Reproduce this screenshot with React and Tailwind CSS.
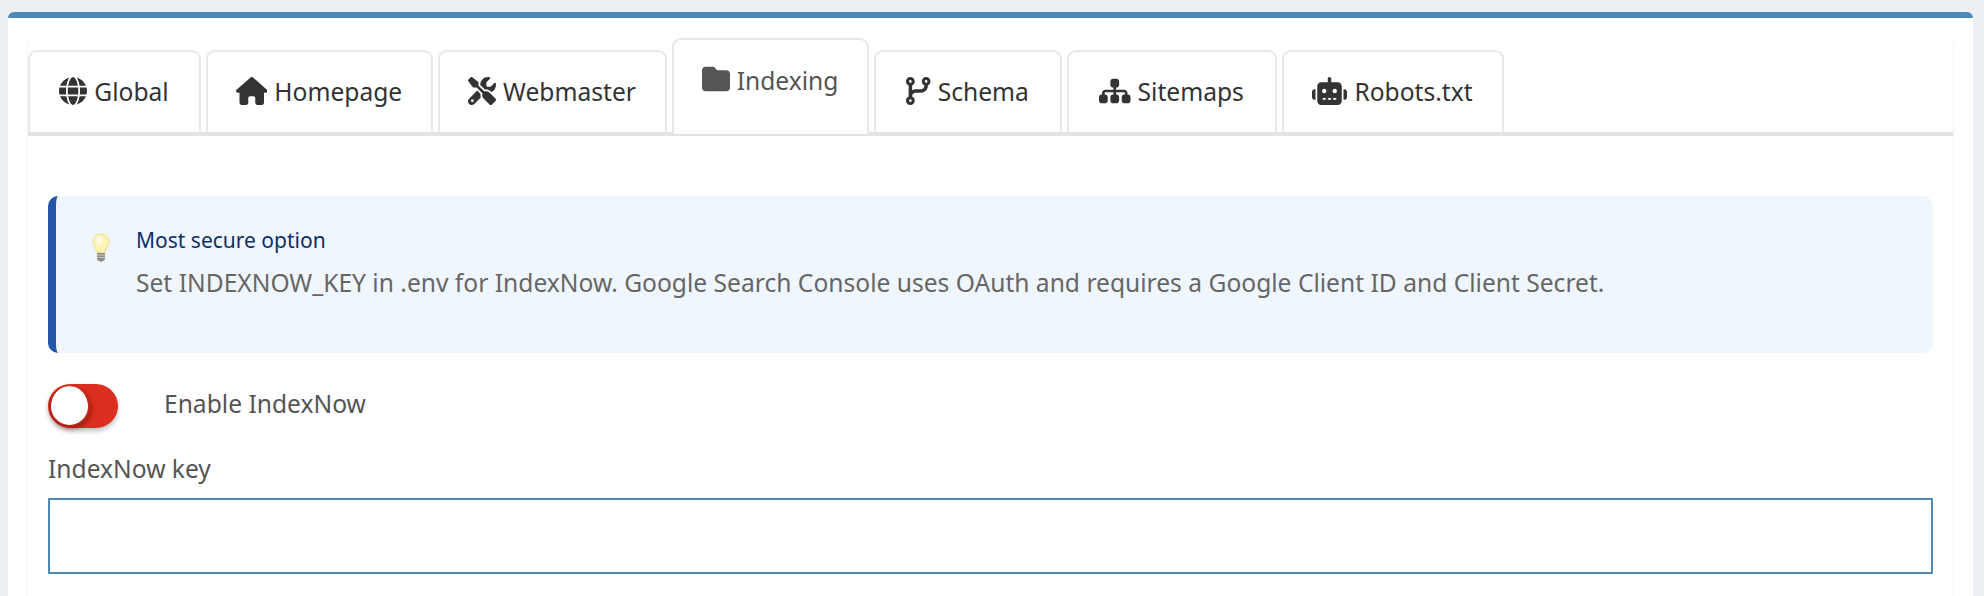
import { FaCodeBranch, FaFolder, FaGlobe, FaHouse, FaRobot, FaScrewdriverWrench, FaSitemap } from 'react-icons/fa6';

const tabs = [
  { label: 'Global', icon: FaGlobe, width: 'w-[173px]', iconWidth: 'w-[28px]' },
  { label: 'Homepage', icon: FaHouse, width: 'w-[227px]', iconWidth: 'w-[31.5px]' },
  { label: 'Webmaster', icon: FaScrewdriverWrench, width: 'w-[229px]', iconWidth: 'w-[28px]' },
  { label: 'Indexing', icon: FaFolder, width: 'w-[197px]', iconWidth: 'w-[28px]', active: true },
  { label: 'Schema', icon: FaCodeBranch, width: 'w-[188px]', iconWidth: 'w-[24.5px]' },
  { label: 'Sitemaps', icon: FaSitemap, width: 'w-[210px]', iconWidth: 'w-[31.5px]' },
  { label: 'Robots.txt', icon: FaRobot, width: 'w-[222px]', iconWidth: 'w-[35px]' },
];

function Bulb() {
  return (
    <svg width="18" height="30" viewBox="0 0 18 30" className="shrink-0">
      <path d="M9 1C4.3 1 1 4.4 1 8.6c0 3.6 2.6 5.6 3.4 9.4.2 1 .7 1.5 1.6 1.5h6c.9 0 1.4-.5 1.6-1.5.8-3.8 3.4-5.8 3.4-9.4C17 4.4 13.7 1 9 1z" fill="#fdf3b4" stroke="#f3dc8c" strokeWidth="1" />
      <ellipse cx="7.5" cy="7" rx="3.5" ry="4" fill="#fffbe3" />
      <path d="M5 20h8v5.5c0 1.5-1 2-2 2.3-.6 1-1.5 1-2 1s-1.4 0-2-1c-1-.3-2-.8-2-2.3z" fill="#8a8a86" />
      <path d="M5 22h8M5 24.5h8" stroke="#c9c9c4" strokeWidth="1" />
    </svg>
  );
}

function Tab({ label, icon: Icon, width, iconWidth, active }) {
  if (active) {
    return (
      <div className={`${width} h-[96px] -mb-[2px] mr-[5px] shrink-0 flex items-start justify-center pt-[23px] pr-[1px] gap-[7px] border-2 border-b-0 border-[#e8e8e8] rounded-t-[9px] bg-white text-[#555]`}>
        <Icon className={`${iconWidth} h-[28px] mt-[2px]`} />
        <span className="leading-[36px]">{label}</span>
      </div>
    );
  }
  return (
    <div className={`${width} h-[82px] mr-[5px] shrink-0 flex items-start justify-center pt-[22px] pr-[1px] gap-[7px] border-2 border-b-0 border-[#e8e8e8] rounded-t-[9px] bg-white text-[#333]`}>
      <Icon className={`${iconWidth} h-[28px] mt-[3px]`} />
      <span className="leading-[36px]">{label}</span>
    </div>
  );
}

export default function App() {
  return (
    <div className="h-[596px] overflow-hidden bg-[#ecf0f5] pt-[12px] pl-[8px] font-['Noto_Sans',sans-serif]">
      <div className="w-[1965px] h-[600px] bg-white border-t-[6px] border-[#4f89b8] rounded-t-[6px] pt-[25px] pl-[19px]">
        <div className="w-[1927px] h-[580px] border-x border-[#f4f4f4]">
          <div className="flex items-end h-[93px] border-b-4 border-[#e3e3e3] text-[24.6px]">
            {tabs.map((tab) => (
              <Tab key={tab.label} {...tab} />
            ))}
          </div>
          <div className="px-[20px] pt-[60px]">
            <div className="h-[157px] flex bg-[#eff6fe] border-l-8 border-[#2456a9] rounded-[10px] pl-[36px] pt-[28px]">
              <div className="pt-[9px] mr-[26px]">
                <Bulb />
              </div>
              <div>
                <p className="text-[21px] leading-[32px] text-[#0f2f66]">Most secure option</p>
                <p className="text-[24.6px] leading-[36px] mt-[9px] text-[#666]">
                  Set INDEXNOW_KEY in .env for IndexNow. Google Search Console uses OAuth and requires a Google Client ID and Client Secret.
                </p>
              </div>
            </div>
            <div className="flex items-center mt-[31px] h-[44px]">
              <div className="w-[70px] h-[44px] rounded-full bg-[#dc2f1f] flex items-center pl-[1px] shadow-[0_3px_5px_rgba(0,0,0,0.25)]">
                <div className="w-[41px] h-[41px] rounded-full bg-white border-2 border-[#b5241a] border-t-0 border-r-[#c02a1d] shadow-[2px_2px_4px_rgba(90,10,5,0.45)]" />
              </div>
              <span className="ml-[46px] -mt-[3px] text-[24.6px] text-[#555]">Enable IndexNow</span>
            </div>
            <label className="block mt-[23px] text-[24.6px] leading-[36px] text-[#555]">IndexNow key</label>
            <input className="block w-full h-[76px] mt-[11px] border-2 border-[#4f89b8] bg-white outline-none" />
          </div>
        </div>
      </div>
    </div>
  );
}
